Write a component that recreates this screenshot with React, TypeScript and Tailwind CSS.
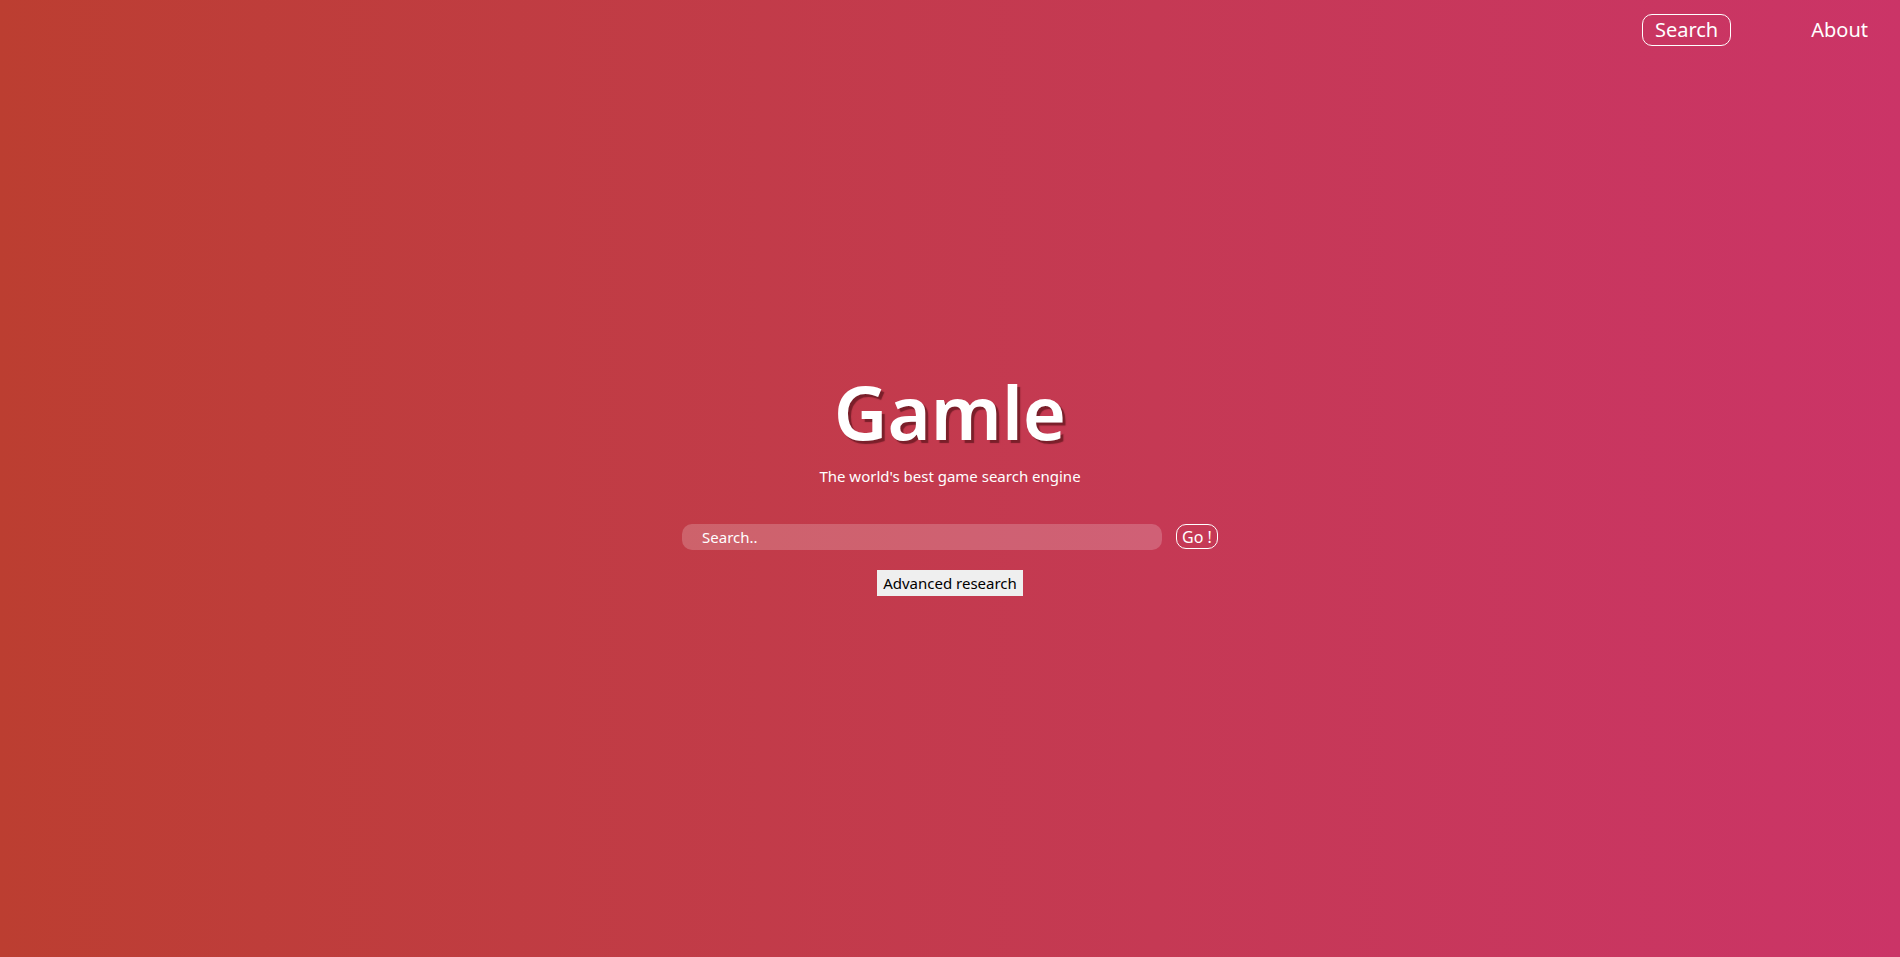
import React from 'react';

const font = { fontFamily: '"Noto Sans", "Open Sans", sans-serif' };

const App: React.FC = () => {
  return (
    <div
      className="min-h-screen flex flex-col bg-gradient-to-r from-[#bc3e31] to-[#cb3467] text-white"
      style={font}
    >
      {/* Nav */}
      <header className="h-[56px] flex justify-end items-center pr-[32px] pt-[3px]">
        <nav className="flex items-center gap-[80px]">
          <a className="border border-white rounded-[10px] px-[12px] h-[32px] flex items-center text-[20px] leading-none">
            Search
          </a>
          <a className="text-[20px] leading-none">About</a>
        </nav>
      </header>

      {/* Main */}
      <main className="flex-1 flex flex-col items-center justify-center pb-[42px]">
        <h1 className="text-[74px] font-semibold leading-none [text-shadow:3px_3px_1px_#7a1f2a]">
          Gamle
        </h1>
        <p className="text-[15px] mt-[16px]">The world's best game search engine</p>

        <div className="flex items-center gap-[14px] mt-[36px]">
          <input
            placeholder="Search.."
            className="w-[480px] h-[26px] rounded-[10px] bg-white/20 px-[20px] text-[15px] text-white placeholder:text-white outline-none"
          />
          <button className="border border-white rounded-[10px] h-[25px] px-[5px] text-[16px] leading-none">
            Go !
          </button>
        </div>

        <button className="mt-[20px] bg-[#efefef] text-black text-[15px] h-[26px] px-[6px]">
          Advanced research
        </button>
      </main>
    </div>
  );
};

export default App;
